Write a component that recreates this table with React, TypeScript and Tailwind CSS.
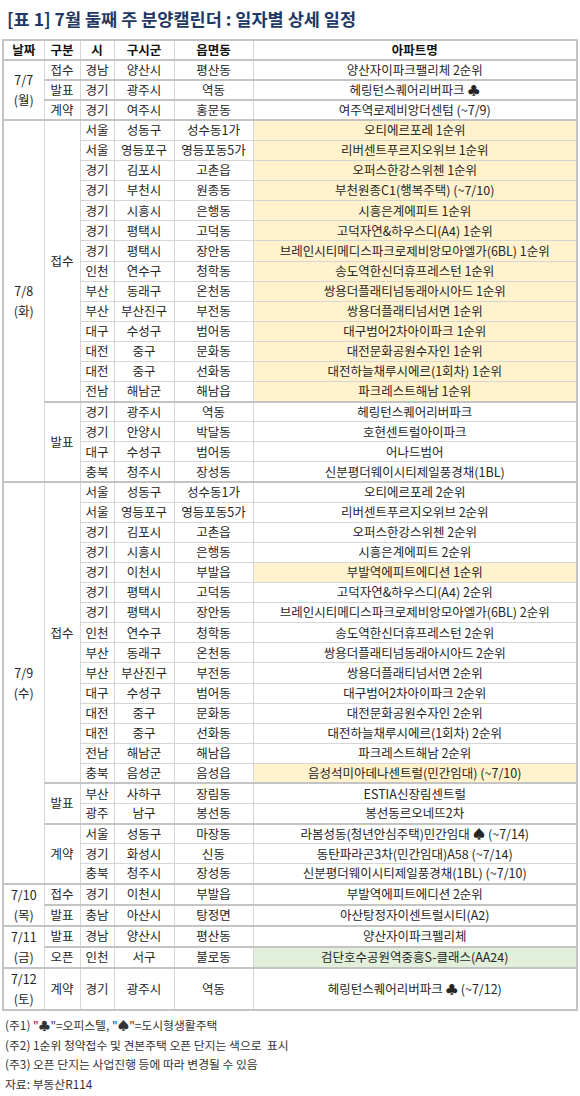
// 7월 둘째 주 분양캘린더 표를 렌더링합니다.

type Mark = "y" | "g" | undefined;
type Row = [string, string, string, string, Mark?];

interface Sub {
  type: string;
  rows: Row[];
}

interface Day {
  date: string;
  dow: string;
  tall?: boolean;
  subs: Sub[];
}

const days: Day[] = [
  {
    date: "7/7",
    dow: "(월)",
    subs: [
      { type: "접수", rows: [["경남", "양산시", "평산동", "양산자이파크팰리체 2순위"]] },
      { type: "발표", rows: [["경기", "광주시", "역동", "헤링턴스퀘어리버파크 ♣"]] },
      { type: "계약", rows: [["경기", "여주시", "홍문동", "여주역로제비앙더센텀 (~7/9)"]] },
    ],
  },
  {
    date: "7/8",
    dow: "(화)",
    subs: [
      {
        type: "접수",
        rows: [
          ["서울", "성동구", "성수동1가", "오티에르포레 1순위", "y"],
          ["서울", "영등포구", "영등포동5가", "리버센트푸르지오위브 1순위", "y"],
          ["경기", "김포시", "고촌읍", "오퍼스한강스위첸 1순위", "y"],
          ["경기", "부천시", "원종동", "부천원종C1(행복주택) (~7/10)", "y"],
          ["경기", "시흥시", "은행동", "시흥은계에피트 1순위", "y"],
          ["경기", "평택시", "고덕동", "고덕자연&하우스디(A4) 1순위", "y"],
          ["경기", "평택시", "장안동", "브레인시티메디스파크로제비앙모아엘가(6BL) 1순위", "y"],
          ["인천", "연수구", "청학동", "송도역한신더휴프레스턴 1순위", "y"],
          ["부산", "동래구", "온천동", "쌍용더플래티넘동래아시아드 1순위", "y"],
          ["부산", "부산진구", "부전동", "쌍용더플래티넘서면 1순위", "y"],
          ["대구", "수성구", "범어동", "대구범어2차아이파크 1순위", "y"],
          ["대전", "중구", "문화동", "대전문화공원수자인 1순위", "y"],
          ["대전", "중구", "선화동", "대전하늘채루시에르(1회차) 1순위", "y"],
          ["전남", "해남군", "해남읍", "파크레스트해남 1순위", "y"],
        ],
      },
      {
        type: "발표",
        rows: [
          ["경기", "광주시", "역동", "헤링턴스퀘어리버파크"],
          ["경기", "안양시", "박달동", "호현센트럴아이파크"],
          ["대구", "수성구", "범어동", "어나드범어"],
          ["충북", "청주시", "장성동", "신분평더웨이시티제일풍경채(1BL)"],
        ],
      },
    ],
  },
  {
    date: "7/9",
    dow: "(수)",
    subs: [
      {
        type: "접수",
        rows: [
          ["서울", "성동구", "성수동1가", "오티에르포레 2순위"],
          ["서울", "영등포구", "영등포동5가", "리버센트푸르지오위브 2순위"],
          ["경기", "김포시", "고촌읍", "오퍼스한강스위첸 2순위"],
          ["경기", "시흥시", "은행동", "시흥은계에피트 2순위"],
          ["경기", "이천시", "부발읍", "부발역에피트에디션 1순위", "y"],
          ["경기", "평택시", "고덕동", "고덕자연&하우스디(A4) 2순위"],
          ["경기", "평택시", "장안동", "브레인시티메디스파크로제비앙모아엘가(6BL) 2순위"],
          ["인천", "연수구", "청학동", "송도역한신더휴프레스턴 2순위"],
          ["부산", "동래구", "온천동", "쌍용더플래티넘동래아시아드 2순위"],
          ["부산", "부산진구", "부전동", "쌍용더플래티넘서면 2순위"],
          ["대구", "수성구", "범어동", "대구범어2차아이파크 2순위"],
          ["대전", "중구", "문화동", "대전문화공원수자인 2순위"],
          ["대전", "중구", "선화동", "대전하늘채루시에르(1회차) 2순위"],
          ["전남", "해남군", "해남읍", "파크레스트해남 2순위"],
          ["충북", "음성군", "음성읍", "음성석미아데나센트럴(민간임대) (~7/10)", "y"],
        ],
      },
      {
        type: "발표",
        rows: [
          ["부산", "사하구", "장림동", "ESTIA신장림센트럴"],
          ["광주", "남구", "봉선동", "봉선동르오네뜨2차"],
        ],
      },
      {
        type: "계약",
        rows: [
          ["서울", "성동구", "마장동", "라봄성동(청년안심주택)민간임대 ♠ (~7/14)"],
          ["경기", "화성시", "신동", "동탄파라곤3차(민간임대)A58 (~7/14)"],
          ["충북", "청주시", "장성동", "신분평더웨이시티제일풍경채(1BL) (~7/10)"],
        ],
      },
    ],
  },
  {
    date: "7/10",
    dow: "(목)",
    subs: [
      { type: "접수", rows: [["경기", "이천시", "부발읍", "부발역에피트에디션 2순위"]] },
      { type: "발표", rows: [["충남", "아산시", "탕정면", "아산탕정자이센트럴시티(A2)"]] },
    ],
  },
  {
    date: "7/11",
    dow: "(금)",
    subs: [
      { type: "발표", rows: [["경남", "양산시", "평산동", "양산자이파크펠리체"]] },
      { type: "오픈", rows: [["인천", "서구", "불로동", "검단호수공원역중흥S-클래스(AA24)", "g"]] },
    ],
  },
  {
    date: "7/12",
    dow: "(토)",
    tall: true,
    subs: [{ type: "계약", rows: [["경기", "광주시", "역동", "헤링턴스퀘어리버파크 ♣ (~7/12)"]] }],
  },
];

const cell = "border border-[#d6d6d6] p-0 text-center align-middle";

function markBg(mark: Mark) {
  if (mark === "y") return "bg-[#fff2cc]";
  if (mark === "g") return "bg-[#e2efda]";
  return "";
}

function DayRows({ day }: { day: Day }) {
  const total = day.subs.reduce((n, s) => n + s.rows.length, 0);
  const out: React.ReactNode[] = [];

  day.subs.forEach((sub, si) => {
    sub.rows.forEach((row, ri) => {
      const firstOfDay = si === 0 && ri === 0;
      const firstOfSub = ri === 0;
      const top = firstOfDay || firstOfSub ? "border-t-2 border-t-[#c4c4c4]" : "";
      out.push(
        <tr key={`${day.date}-${si}-${ri}`} className={day.tall ? "h-[42px]" : "h-[20.1px]"}>
          {firstOfDay ? (
            <td rowSpan={total} className={`${cell} border-t-2 border-t-[#c4c4c4] leading-[20px]`}>
              {day.date}
              <br />
              {day.dow}
            </td>
          ) : null}
          {firstOfSub ? (
            <td rowSpan={sub.rows.length} className={`${cell} ${top}`}>
              {sub.type}
            </td>
          ) : null}
          <td className={`${cell} ${top}`}>{row[0]}</td>
          <td className={`${cell} ${top}`}>{row[1]}</td>
          <td className={`${cell} ${top}`}>{row[2]}</td>
          <td className={`${cell} ${top} ${markBg(row[4])}`}>{row[3]}</td>
        </tr>,
      );
    });
  });

  return <>{out}</>;
}

export default function App() {
  return (
    <div className="w-[580px] bg-white font-['Noto_Sans_CJK_KR','Noto_Sans',sans-serif] text-[#262626]">
      <div className="flex h-[39px] items-center pl-[7px] text-[17.5px] font-bold text-[#1f3864]">
        [표 1] 7월 둘째 주 분양캘린더 : 일자별 상세 일정
      </div>

      <table className="ml-[2px] w-[576px] table-fixed border-collapse border-2 border-[#c4c4c4] text-[12.5px] leading-none">
        <colgroup>
          <col className="w-[41px]" />
          <col className="w-[36px]" />
          <col className="w-[34px]" />
          <col className="w-[60px]" />
          <col className="w-[79px]" />
          <col />
        </colgroup>
        <thead>
          <tr className="h-[20.1px] font-bold text-[#111]">
            <th className={cell}>날짜</th>
            <th className={cell}>구분</th>
            <th className={cell}>시</th>
            <th className={cell}>구시군</th>
            <th className={cell}>읍면동</th>
            <th className={cell}>아파트명</th>
          </tr>
        </thead>
        <tbody>
          {days.map((day) => (
            <DayRows key={day.date} day={day} />
          ))}
        </tbody>
      </table>

      <div className="mt-[4px] pl-[5px] text-[11.8px] leading-[19.6px] text-[#333]">
        <p>(주1) "♣"=오피스텔, "♠"=도시형생활주택</p>
        <p>(주2) 1순위 청약접수 및 견본주택 오픈 단지는 색으로 &nbsp;표시</p>
        <p>(주3) 오픈 단지는 사업진행 등에 따라 변경될 수 있음</p>
        <p>자료: 부동산R114</p>
      </div>
    </div>
  );
}
